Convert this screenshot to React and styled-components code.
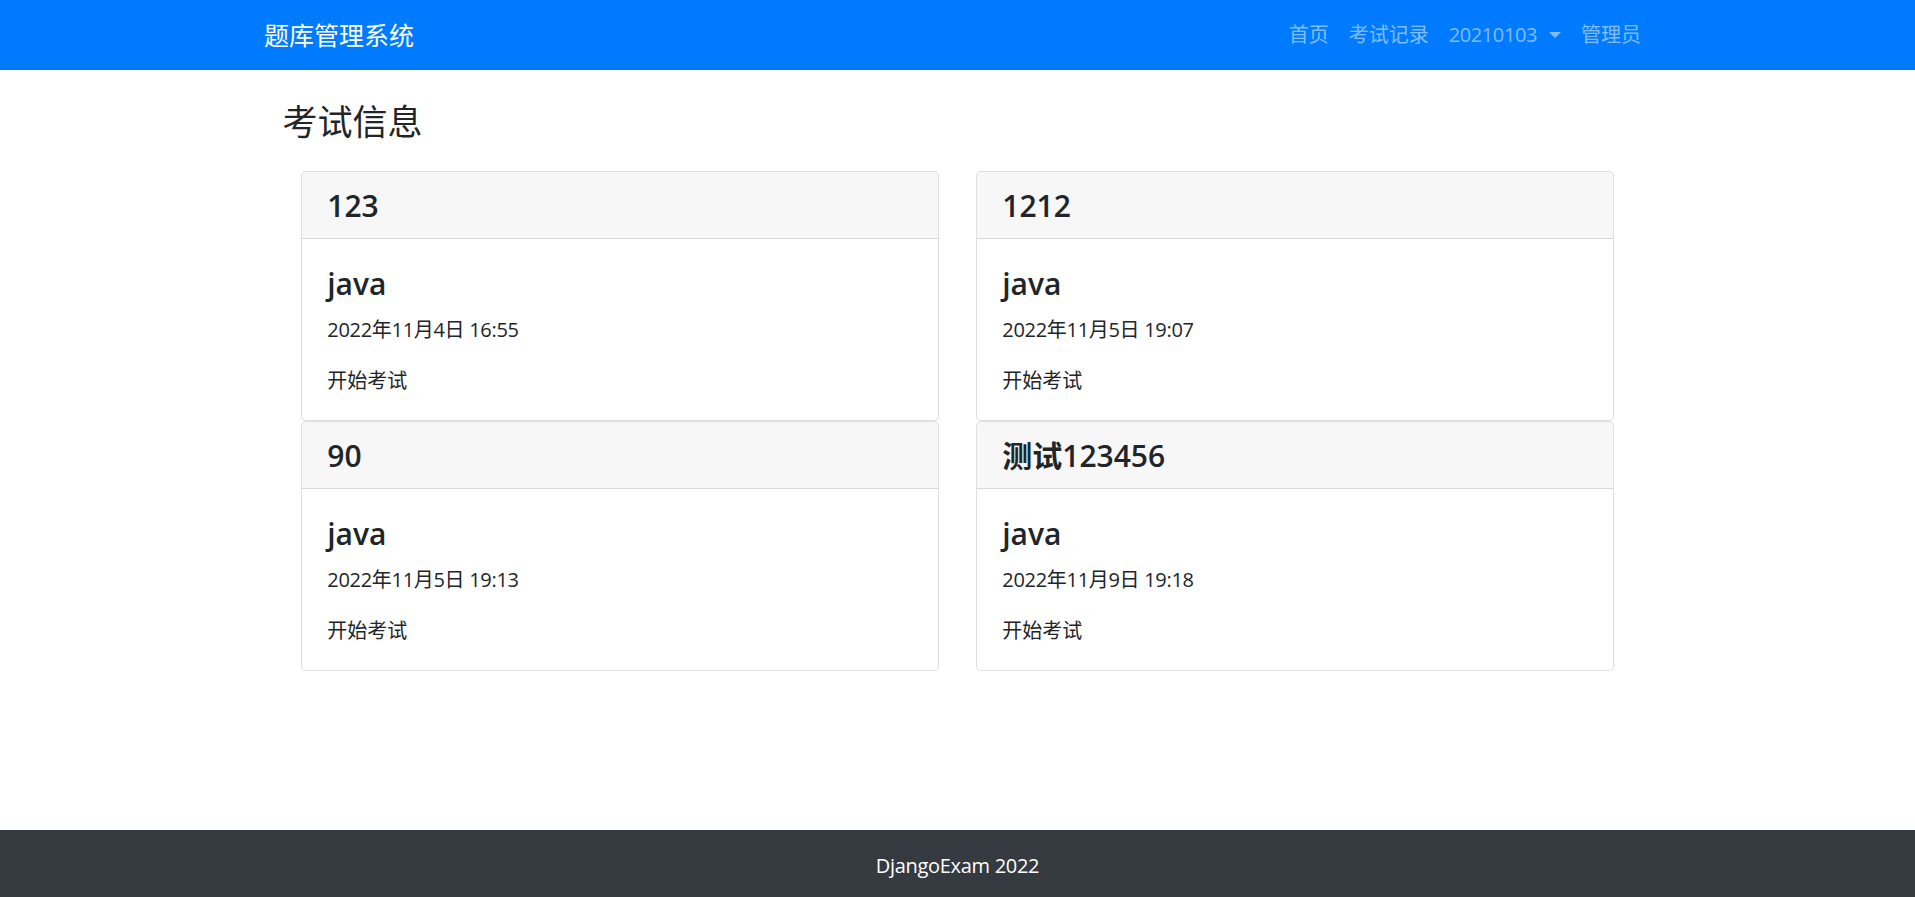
import React from "react";
import styled, { createGlobalStyle } from "styled-components";

const GlobalStyle = createGlobalStyle`
  html, body {
    margin: 0;
    padding: 0;
  }
  body {
    font-family: "Open Sans", "Noto Sans CJK SC", sans-serif;
    font-size: 20px;
    line-height: 1.5;
    color: #212529;
    background: #fff;
  }
`;

const Page = styled.div`
  display: flex;
  flex-direction: column;
  min-height: 100vh;
`;

const Navbar = styled.nav`
  background-color: #007bff;
  padding: 10px 0;
`;

const NavContainer = styled.div`
  width: 1425px;
  margin: 0 auto;
  padding: 0 19px;
  box-sizing: border-box;
  display: flex;
  align-items: center;
  justify-content: space-between;
`;

const Brand = styled.a`
  font-size: 25px;
  line-height: 37px;
  padding: 6px 0 6px;
  color: #fff;
  text-decoration: none;
`;

const NavList = styled.ul`
  display: flex;
  list-style: none;
  margin: 0;
  padding: 0;
`;

const NavLink = styled.a`
  display: flex;
  align-items: center;
  padding: 10px;
  color: rgba(255, 255, 255, 0.5);
  text-decoration: none;
  line-height: 30px;
  letter-spacing: ${(p) => (p.$num ? "-0.4px" : "0")};
`;

const Caret = styled.span`
  display: inline-block;
  margin-left: 12px;
  border-top: 6px solid;
  border-right: 6px solid transparent;
  border-left: 6px solid transparent;
`;

const Main = styled.main`
  flex: 1;
  width: 1350px;
  margin: 0 auto;
  padding-top: 31px;
`;

const Title = styled.h3`
  font-size: 35px;
  font-weight: 400;
  line-height: 42px;
  margin: 0 0 28px;
`;

const Grid = styled.div`
  display: grid;
  grid-template-columns: 1fr 1fr;
  column-gap: 37.5px;
  padding: 0 18.75px;
`;

const Card = styled.div`
  border: 1px solid rgba(0, 0, 0, 0.125);
  border-radius: 5px;
  background: #fff;
  overflow: hidden;
`;

const CardHeader = styled.div`
  background: rgba(0, 0, 0, 0.03);
  border-bottom: 1px solid rgba(0, 0, 0, 0.125);
  padding: 16px 25px 14px;
  font-size: 30px;
  font-weight: 600;
  line-height: 36px;
`;

const CardBody = styled.div`
  padding: 27px 25px 24px;
`;

const CardTitle = styled.h4`
  margin: 0 0 13px;
  font-size: 30px;
  font-weight: 600;
  line-height: 36px;
`;

const CardText = styled.p`
  margin: 0 0 21px;
  letter-spacing: -0.3px;
`;

const StartLink = styled.a`
  display: block;
  color: #212529;
  text-decoration: none;
`;

const Footer = styled.footer`
  background: #343a40;
  color: #fff;
  text-align: center;
  padding: 21px 0 16px;
  line-height: 30px;
  letter-spacing: -0.3px;
`;

const exams = [
  { name: "123", subject: "java", time: "2022年11月4日 16:55" },
  { name: "1212", subject: "java", time: "2022年11月5日 19:07" },
  { name: "90", subject: "java", time: "2022年11月5日 19:13" },
  { name: "测试123456", subject: "java", time: "2022年11月9日 19:18" },
];

const App = () => {
  return (
    <>
      <GlobalStyle />
      <Page>
        <Navbar>
          <NavContainer>
            <Brand href="#">题库管理系统</Brand>
            <NavList>
              <li><NavLink href="#">首页</NavLink></li>
              <li><NavLink href="#">考试记录</NavLink></li>
              <li>
                <NavLink href="#" $num>
                  20210103
                  <Caret />
                </NavLink>
              </li>
              <li><NavLink href="#">管理员</NavLink></li>
            </NavList>
          </NavContainer>
        </Navbar>
        <Main>
          <Title>考试信息</Title>
          <Grid>
            {exams.map((exam) => (
              <Card key={exam.name}>
                <CardHeader>{exam.name}</CardHeader>
                <CardBody>
                  <CardTitle>{exam.subject}</CardTitle>
                  <CardText>{exam.time}</CardText>
                  <StartLink href="#">开始考试</StartLink>
                </CardBody>
              </Card>
            ))}
          </Grid>
        </Main>
        <Footer>DjangoExam 2022</Footer>
      </Page>
    </>
  );
};

export default App;
